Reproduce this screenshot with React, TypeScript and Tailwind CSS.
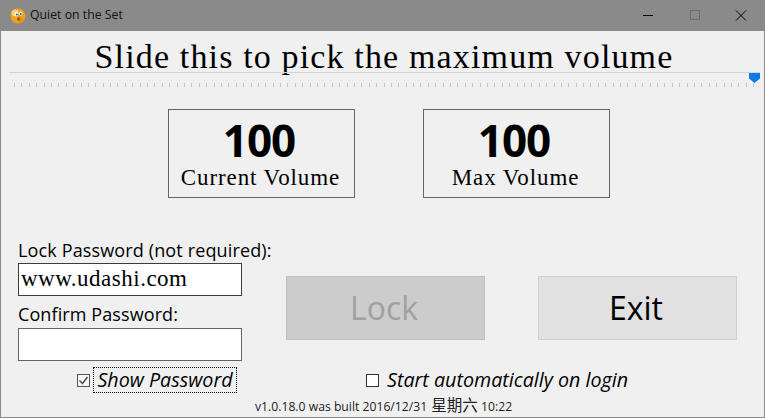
const serif = "font-['Liberation_Serif','DejaVu_Serif',serif]";
const sans = "font-['Open_Sans','Noto_Sans',sans-serif]";

const ticks = Array.from({ length: 101 }, (_, i) => i);

function AppIcon() {
  return (
    <svg width="16" height="16" viewBox="0 0 16 16" className="shrink-0">
      <circle cx="8" cy="8" r="7.6" fill="#eea21f" />
      <circle cx="5" cy="5" r="3.6" fill="#f8d16a" />
      <circle cx="11" cy="12" r="2.6" fill="#f08f18" />
      <ellipse cx="6.2" cy="6" rx="1.8" ry="2.3" fill="#fff" />
      <ellipse cx="10.8" cy="5.6" rx="1.6" ry="2.1" fill="#fff" />
      <circle cx="6.8" cy="6.4" r="1" fill="#2c5fa8" />
      <circle cx="10.9" cy="6" r="1" fill="#2c5fa8" />
      <ellipse cx="8.6" cy="11" rx="1.4" ry="1.7" fill="#8f4a12" />
    </svg>
  );
}

function ValueBox({ label, value }: { label: string; value: string }) {
  return (
    <div className="flex h-[89px] w-[187px] flex-col items-center border border-[#646464]">
      <div className={`${sans} mt-[6px] h-[48px] pr-[5px] text-[44px] leading-[48px] font-bold tracking-[-1px] text-black`}>{value}</div>
      <div className={`${serif} pr-[2px] text-[23px] leading-[28px] tracking-[0.9px] text-black`}>{label}</div>
    </div>
  );
}

export default function App() {
  return (
    <div className="flex h-[418px] w-[765px] flex-col overflow-hidden border border-t-0 border-[#8a8a8a] bg-[#f0f0f0]">
      {/* Title bar */}
      <div className="flex h-[31px] shrink-0 items-center bg-[#8a8a8a] pl-[9px]">
        <AppIcon />
        <span className={`${sans} ml-[4px] text-[12.3px] text-[#111]`}>Quiet on the Set</span>
        <div className="ml-auto flex items-center">
          <svg width="46" height="31" viewBox="0 0 46 31"><path d="M17 15.5h10" stroke="#000" strokeWidth="1" /></svg>
          <svg width="46" height="31" viewBox="0 0 46 31"><rect x="18.5" y="10.5" width="9" height="9" fill="none" stroke="#6e6e6e" /></svg>
          <svg width="46" height="31" viewBox="0 0 46 31"><path d="M18 10.5l10 10M28 10.5l-10 10" stroke="#000" strokeWidth="1" /></svg>
        </div>
      </div>

      {/* Heading */}
      <div className={`${serif} h-[41px] pl-[3px] text-center text-[34px] leading-[52px] tracking-[1.15px] whitespace-nowrap text-black`}>
        Slide this to pick the maximum volume
      </div>

      {/* Slider */}
      <div className="relative mr-[4px] ml-[8px] h-[15px] border-t border-[#d4d4d4]">
        <div className="absolute top-0 right-0 h-[10px] w-[11px] bg-[#0f7ae5] [clip-path:polygon(0_0,100%_0,100%_55%,50%_100%,0_55%)]" />
        <div className="mt-[10px] mr-[5px] ml-[5px] flex justify-between">
          {ticks.map((t) => (
            <span key={t} className="h-[4px] w-px bg-[#c4c4c4]" />
          ))}
        </div>
      </div>

      {/* Value boxes */}
      <div className="mt-[22px] flex gap-[68px] pl-[167px]">
        <ValueBox label="Current Volume" value="100" />
        <ValueBox label="Max Volume" value="100" />
      </div>

      {/* Lower section */}
      <div className="mt-[40px] flex pl-[17px]">
        <div className="flex w-[224px] flex-col">
          <label className={`${sans} h-[25px] text-[18px] leading-[24px] tracking-[0.14px] whitespace-nowrap text-black`}>Lock Password (not required):</label>
          <div className={`${serif} h-[33px] border border-[#3c3c3c] bg-white pl-[2px] text-[23px] leading-[30px] tracking-[0.5px] text-black`}>www.udashi.com</div>
          <label className={`${sans} mt-[6px] h-[26px] text-[18px] leading-[24px] tracking-[0.1px] text-black`}>Confirm Password:</label>
          <div className="h-[33px] border border-[#646464] bg-white" />
        </div>
        <div className="mt-[38px] ml-[44px] flex gap-[53px]">
          <button className={`${sans} h-[64px] w-[199px] border border-[#bfbfbf] bg-[#cccccc] pr-[3px] text-[32px] text-[#a0a0a0]`}>Lock</button>
          <button className={`${sans} h-[64px] w-[199px] border border-[#d0d0d0] bg-[#e1e1e1] pr-[3px] text-[32px] text-black`}>Exit</button>
        </div>
      </div>

      {/* Checkboxes */}
      <div className={`${sans} mt-[6px] flex h-[26px] items-center text-[19.7px] italic text-black`}>
        <span className="ml-[76px] flex h-[13px] w-[13px] items-center justify-center border border-[#555] bg-[#f4f4f4]">
          <svg width="11" height="11" viewBox="0 0 11 11"><path d="M1.5 5.5l3 3 5-6.5" stroke="#444" strokeWidth="1.4" fill="none" /></svg>
        </span>
        <span className="ml-[3px] flex h-[26px] w-[144px] items-center justify-center border border-dotted border-black whitespace-nowrap">Show Password</span>
        <span className="ml-[129px] h-[13px] w-[13px] border border-[#333] bg-white" />
        <span className="ml-[8px] whitespace-nowrap">Start automatically on login</span>
      </div>

      {/* Build info */}
      <div className={`${sans} mt-[3px] pl-[254px] text-[12.2px] leading-[16px] whitespace-nowrap text-[#222]`}>
        v1.0.18.0 was built 2016/12/31 <span className="ml-px font-['Noto_Sans_CJK_SC'] text-[15.5px]">星期六</span> 10:22
      </div>
    </div>
  );
}
